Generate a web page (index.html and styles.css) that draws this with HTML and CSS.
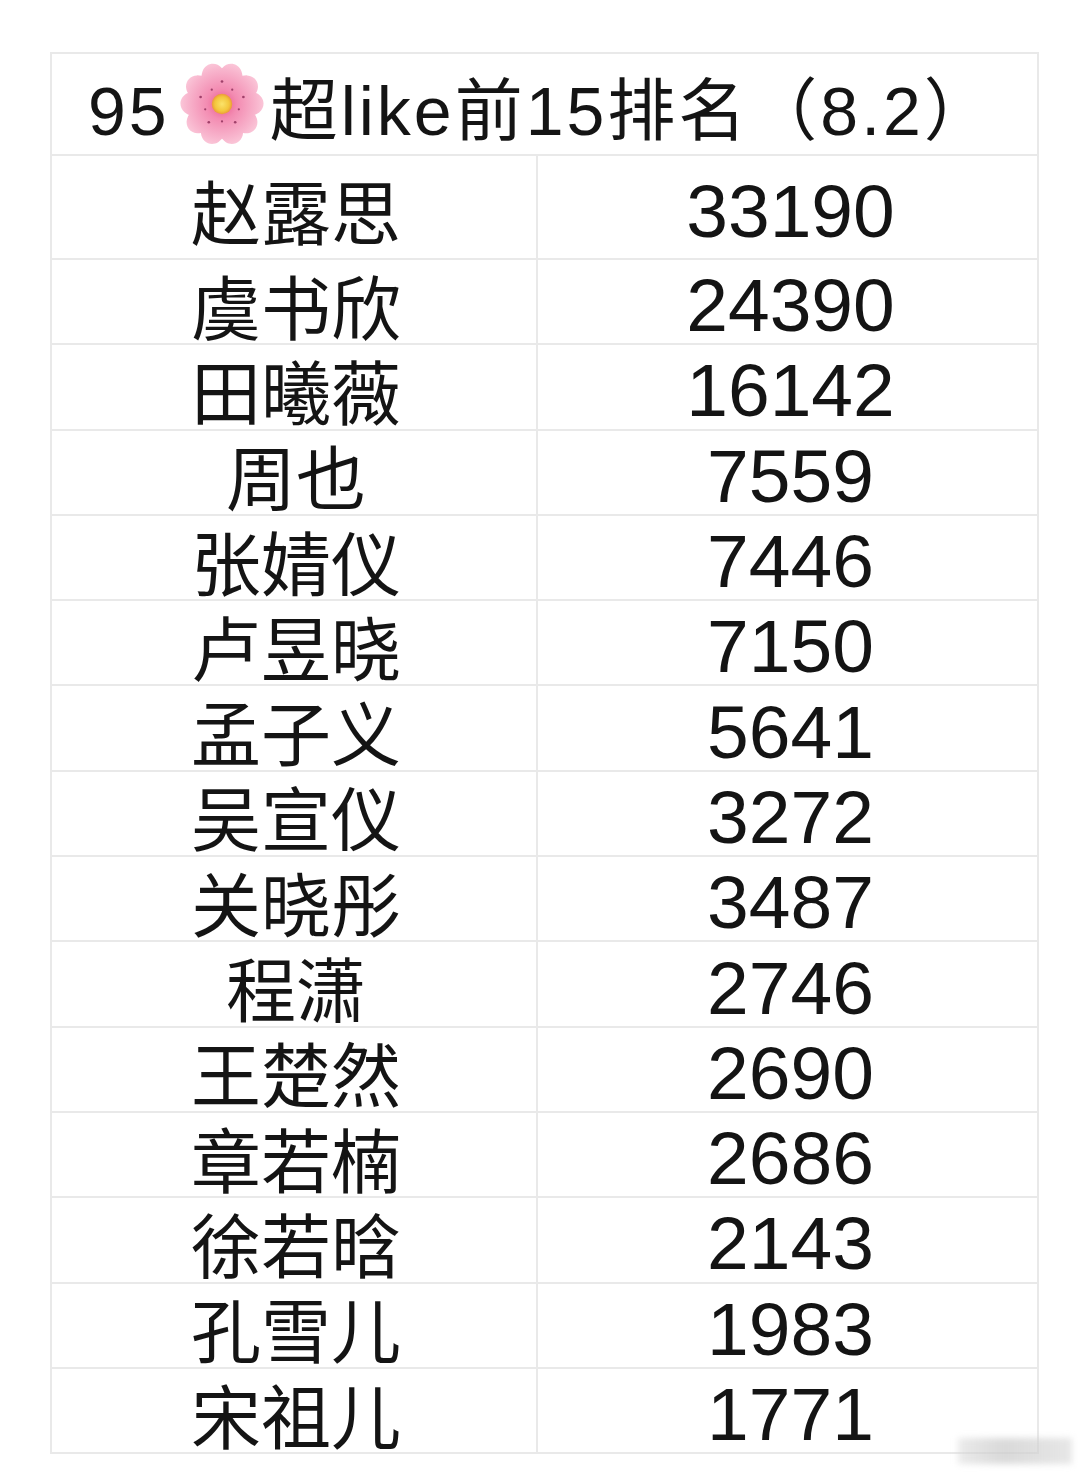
FILE: index.html
```html
<!DOCTYPE html>
<html lang="zh-CN">
<head>
<meta charset="utf-8">
<title>95超like前15排名</title>
<link rel="stylesheet" href="styles.css">
</head>
<body>
<div class="sheet">
  <div class="title">
    <span class="t-num">95</span><svg class="blossom" viewBox="-42 -42 84 84" width="86" height="86" aria-hidden="true">
      <defs>
        <radialGradient id="pg" cx="0" cy="0" r="42" gradientUnits="userSpaceOnUse">
          <stop offset="0" stop-color="#e9578c"/>
          <stop offset="0.35" stop-color="#f38cb2"/>
          <stop offset="0.8" stop-color="#f8b5cd"/>
          <stop offset="1" stop-color="#fbc9da"/>
        </radialGradient>
        <radialGradient id="cg" cx="0" cy="0" r="10" gradientUnits="userSpaceOnUse">
          <stop offset="0" stop-color="#fbe36a"/>
          <stop offset="0.7" stop-color="#f3c63c"/>
          <stop offset="1" stop-color="#eb9a3a"/>
        </radialGradient>
        <path id="petal" d="M0,-3 C-15,-7 -23,-21 -19,-32 C-16,-40 -6,-42 0,-35 C6,-42 16,-40 19,-32 C23,-21 15,-7 0,-3 Z"/>
      </defs>
      <g fill="url(#pg)">
        <use href="#petal"/>
        <use href="#petal" transform="rotate(72)"/>
        <use href="#petal" transform="rotate(144)"/>
        <use href="#petal" transform="rotate(216)"/>
        <use href="#petal" transform="rotate(288)"/>
      </g>
      <g fill="#a0406a">
        <circle cx="0" cy="-22" r="1.3"/>
        <circle cx="20.9" cy="-6.8" r="1.3"/>
        <circle cx="12.9" cy="17.8" r="1.3"/>
        <circle cx="-12.9" cy="17.8" r="1.3"/>
        <circle cx="-20.9" cy="-6.8" r="1.3"/>
        <circle cx="10" cy="-14" r="1.1"/>
        <circle cx="16.4" cy="5.2" r="1.1"/>
        <circle cx="0" cy="17" r="1.1"/>
        <circle cx="-16.4" cy="5.2" r="1.1"/>
        <circle cx="-10" cy="-14" r="1.1"/>
      </g>
      <circle cx="0" cy="0" r="10" fill="url(#cg)"/>
    </svg><span class="t-text">超like前15排名（8.2）</span>
  </div>

  <div class="cell name first">赵露思</div><div class="cell num first">33190</div>
  <div class="cell name">虞书欣</div><div class="cell num">24390</div>
  <div class="cell name">田曦薇</div><div class="cell num">16142</div>
  <div class="cell name">周也</div><div class="cell num">7559</div>
  <div class="cell name">张婧仪</div><div class="cell num">7446</div>
  <div class="cell name">卢昱晓</div><div class="cell num">7150</div>
  <div class="cell name">孟子义</div><div class="cell num">5641</div>
  <div class="cell name">吴宣仪</div><div class="cell num">3272</div>
  <div class="cell name">关晓彤</div><div class="cell num">3487</div>
  <div class="cell name">程潇</div><div class="cell num">2746</div>
  <div class="cell name">王楚然</div><div class="cell num">2690</div>
  <div class="cell name">章若楠</div><div class="cell num">2686</div>
  <div class="cell name">徐若晗</div><div class="cell num">2143</div>
  <div class="cell name">孔雪儿</div><div class="cell num">1983</div>
  <div class="cell name">宋祖儿</div><div class="cell num">1771</div>
</div>
<div class="watermark" aria-hidden="true"></div>
</body>
</html>
```

FILE: styles.css
```css
html, body {
  margin: 0;
  padding: 0;
  background: #ffffff;
}

body {
  width: 1080px;
  height: 1480px;
  position: relative;
  overflow: hidden;
  color: #141414;
  font-family: "Liberation Sans", "Noto Sans CJK SC", sans-serif;
}

.sheet {
  display: grid;
  grid-template-columns: 486px 501px;
  width: 989px;
  margin: 52px 0 0 50px;
  border-top: 2px solid #e9e9e9;
  border-left: 2px solid #e9e9e9;
  box-sizing: border-box;
}

.title {
  grid-column: 1 / span 2;
  height: 102px;
  box-sizing: border-box;
  border-right: 2px solid #e9e9e9;
  border-bottom: 2px solid #e9e9e9;
  display: flex;
  align-items: center;
  padding: 13px 0 0 36px;
  font-size: 68px;
  line-height: 1;
  letter-spacing: 3px;
  white-space: nowrap;
}

.t-num {
  font-family: "Liberation Sans", sans-serif;
}

.t-text {
  font-family: "Liberation Sans", "Noto Sans CJK SC", sans-serif;
}

.blossom {
  width: 86px;
  height: 86px;
  margin: 0 5px 13px 9px;
  flex: none;
}

.cell {
  height: 85.3px;
  box-sizing: border-box;
  border-right: 2px solid #e9e9e9;
  border-bottom: 2px solid #e9e9e9;
  display: flex;
  align-items: center;
  justify-content: center;
  line-height: 1;
  white-space: nowrap;
}

.cell.first {
  height: 104px;
}

.name {
  font-family: "Noto Sans CJK SC", sans-serif;
  font-size: 70px;
  padding: 6px 0 0 4px;
}

.num {
  font-family: "Liberation Sans", sans-serif;
  font-size: 75px;
  padding: 8px 0 0 6px;
}

.watermark {
  position: absolute;
  left: 958px;
  top: 1438px;
  width: 114px;
  height: 26px;
  background: linear-gradient(90deg, rgba(215,215,215,0.5), rgba(205,205,205,0.75) 40%, rgba(215,215,215,0.6));
  filter: blur(3px);
}
```
